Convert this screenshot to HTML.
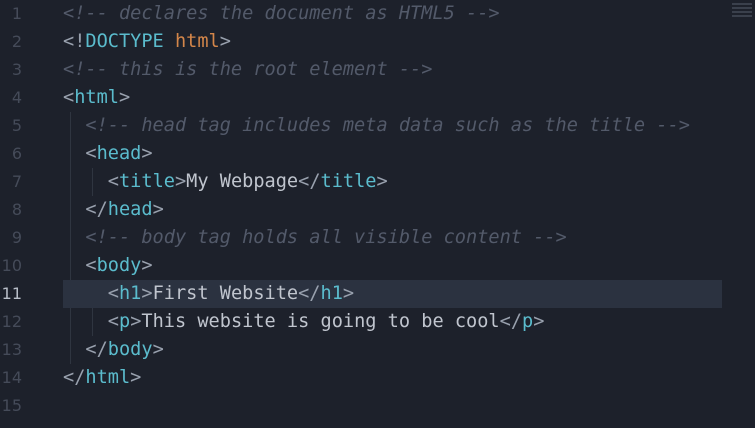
<!DOCTYPE html>
<html><head><style>
body{margin:0;width:755px;height:428px;background:#1d212b;overflow:hidden;font-family:"DejaVu Sans Mono","Liberation Mono",monospace;font-size:18.6px;position:relative}
.l{position:absolute;left:0;height:28px;line-height:28px;width:755px;white-space:pre}
.n{position:absolute;left:0;width:22px;text-align:right;color:#454b59;font-family:"DejaVu Sans","Liberation Sans",sans-serif;font-size:16px}
.c{position:absolute;left:63px;color:#c0c5ce}
.cm{color:#535a6a;font-style:italic}
.t{color:#5bbccd}
.o{color:#d4864a}
.p{color:#99a1ae}
.hl{background:#2b3240}
.g{position:absolute;width:1px;background:#2f3540}
</style></head><body>
<div class="g" style="left:70px;top:112px;height:252px"></div>
<div class="g" style="left:92px;top:168px;height:28px"></div>
<div class="g" style="left:92px;top:280px;height:56px"></div>
<div class="l hl" style="top:280px;left:63px;width:659px"></div>
<div class="l" style="top:0"><span class="n">1</span><span class="c cm">&lt;!-- declares the document as HTML5 --&gt;</span></div>
<div class="l" style="top:28px"><span class="n">2</span><span class="c"><span class="p">&lt;!</span><span class="t">DOCTYPE</span> <span class="o">html</span><span class="p">&gt;</span></span></div>
<div class="l" style="top:56px"><span class="n">3</span><span class="c cm">&lt;!-- this is the root element --&gt;</span></div>
<div class="l" style="top:84px"><span class="n">4</span><span class="c"><span class="p">&lt;</span><span class="t">html</span><span class="p">&gt;</span></span></div>
<div class="l" style="top:112px"><span class="n">5</span><span class="c cm">  &lt;!-- head tag includes meta data such as the title --&gt;</span></div>
<div class="l" style="top:140px"><span class="n">6</span><span class="c">  <span class="p">&lt;</span><span class="t">head</span><span class="p">&gt;</span></span></div>
<div class="l" style="top:168px"><span class="n">7</span><span class="c">    <span class="p">&lt;</span><span class="t">title</span><span class="p">&gt;</span>My Webpage<span class="p">&lt;/</span><span class="t">title</span><span class="p">&gt;</span></span></div>
<div class="l" style="top:196px"><span class="n">8</span><span class="c">  <span class="p">&lt;/</span><span class="t">head</span><span class="p">&gt;</span></span></div>
<div class="l" style="top:224px"><span class="n">9</span><span class="c cm">  &lt;!-- body tag holds all visible content --&gt;</span></div>
<div class="l" style="top:252px"><span class="n">10</span><span class="c">  <span class="p">&lt;</span><span class="t">body</span><span class="p">&gt;</span></span></div>
<div class="l" style="top:280px"><span class="n" style="color:#b8bec8">11</span><span class="c">    <span class="p">&lt;</span><span class="t">h1</span><span class="p">&gt;</span>First Website<span class="p">&lt;/</span><span class="t">h1</span><span class="p">&gt;</span></span></div>
<div class="l" style="top:308px"><span class="n">12</span><span class="c">    <span class="p">&lt;</span><span class="t">p</span><span class="p">&gt;</span>This website is going to be cool<span class="p">&lt;/</span><span class="t">p</span><span class="p">&gt;</span></span></div>
<div class="l" style="top:336px"><span class="n">13</span><span class="c">  <span class="p">&lt;/</span><span class="t">body</span><span class="p">&gt;</span></span></div>
<div class="l" style="top:364px"><span class="n">14</span><span class="c"><span class="p">&lt;/</span><span class="t">html</span><span class="p">&gt;</span></span></div>
<div class="l" style="top:392px"><span class="n">15</span></div>
<div style="position:absolute;left:732px;top:3px;width:20px;height:16px;background:repeating-linear-gradient(#3a404c 0 2px,transparent 2px 4px)"></div>
</body></html>
